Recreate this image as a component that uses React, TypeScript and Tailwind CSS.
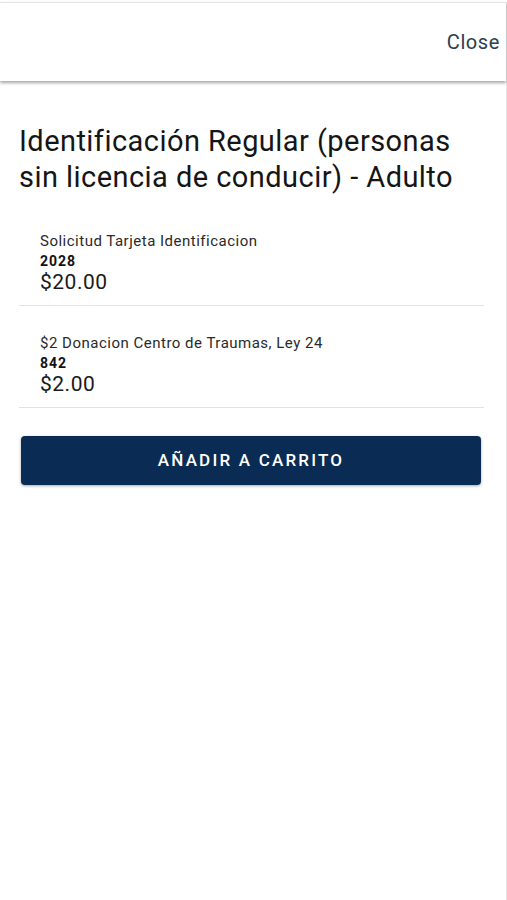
const items = [
  { name: 'Solicitud Tarjeta Identificacion', code: '2028', price: '$20.00' },
  { name: '$2 Donacion Centro de Traumas, Ley 24', code: '842', price: '$2.00' },
]

export default function App() {
  return (
    <div
      className="min-h-[900px] bg-white border-r border-[#e6e6e6] text-[#1a1a1a]"
      style={{ fontFamily: 'Roboto, "Liberation Sans", sans-serif' }}
    >
      <header className="h-[79px] mt-[2px] border-t border-[#e4e4e4] bg-white shadow-[0_2px_3px_rgba(0,0,0,0.35)] flex items-center justify-end pr-[6px]">
        <button className="text-[20px] tracking-[0.6px] text-[#2b3d52] leading-none">Close</button>
      </header>

      <main className="pt-[42px]">
        <h1 className="pl-[19px] pr-[14px] text-[29px] leading-[36px] tracking-[0.45px] text-[#151515]">
          Identificación Regular (personas sin licencia de conducir) - Adulto
        </h1>

        <div className="mt-[9px] ml-[19px] mr-[22px]">
          {items.map((item) => (
            <div key={item.code} className="pl-[21px] pt-[27px] pb-[12px] border-b border-[#e2e2e2]">
              <p className="text-[15px] leading-[20px] tracking-[0.5px] text-[#2a2a2a]">{item.name}</p>
              <p className="text-[14px] leading-[20px] tracking-[1px] font-bold text-[#111]">{item.code}</p>
              <p className="text-[21px] leading-[22px] tracking-[0.5px] text-[#1a1a1a]">{item.price}</p>
            </div>
          ))}
        </div>

        <div className="pl-[21px] pr-[25px] mt-[28px]">
          <button className="w-full h-[49px] rounded-[4px] bg-[#0a2c54] text-white text-[17px] font-medium tracking-[2.2px] shadow-[0_1px_3px_rgba(0,0,0,0.35)]">
            AÑADIR A CARRITO
          </button>
        </div>
      </main>
    </div>
  )
}
